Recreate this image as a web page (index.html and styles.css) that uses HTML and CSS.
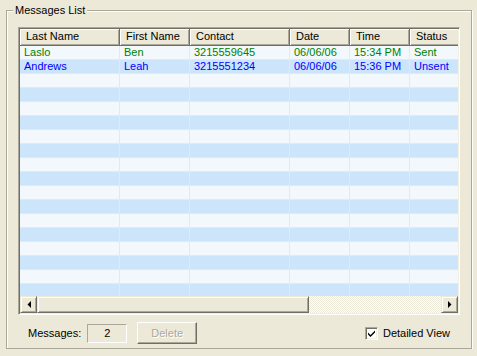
FILE: index.html
```html
<!DOCTYPE html>
<html lang="en">
<head>
    <meta charset="UTF-8">
    <title>Messages List</title>
    <link rel="stylesheet" href="styles.css">
</head>
<body>
    <fieldset class="group">
        <legend>Messages List</legend>
        <div class="listview">
            <div class="lv-view">
                <div class="lv-table">
                    <div class="lv-header">
                        <div class="hcell">Last Name</div>
                        <div class="hcell">First Name</div>
                        <div class="hcell">Contact</div>
                        <div class="hcell">Date</div>
                        <div class="hcell">Time</div>
                        <div class="hcell">Status</div>
                    </div>
                    <div class="lv-rows" id="rows">
                        <div class="row sent">
                            <div class="cell">Laslo</div>
                            <div class="cell">Ben</div>
                            <div class="cell">3215559645</div>
                            <div class="cell">06/06/06</div>
                            <div class="cell">15:34 PM</div>
                            <div class="cell">Sent</div>
                        </div>
                        <div class="row unsent">
                            <div class="cell">Andrews</div>
                            <div class="cell">Leah</div>
                            <div class="cell">3215551234</div>
                            <div class="cell">06/06/06</div>
                            <div class="cell">15:36 PM</div>
                            <div class="cell">Unsent</div>
                        </div>
                        <div class="row"><div class="cell"></div><div class="cell"></div><div class="cell"></div><div class="cell"></div><div class="cell"></div><div class="cell"></div></div>
                        <div class="row"><div class="cell"></div><div class="cell"></div><div class="cell"></div><div class="cell"></div><div class="cell"></div><div class="cell"></div></div>
                        <div class="row"><div class="cell"></div><div class="cell"></div><div class="cell"></div><div class="cell"></div><div class="cell"></div><div class="cell"></div></div>
                        <div class="row"><div class="cell"></div><div class="cell"></div><div class="cell"></div><div class="cell"></div><div class="cell"></div><div class="cell"></div></div>
                        <div class="row"><div class="cell"></div><div class="cell"></div><div class="cell"></div><div class="cell"></div><div class="cell"></div><div class="cell"></div></div>
                        <div class="row"><div class="cell"></div><div class="cell"></div><div class="cell"></div><div class="cell"></div><div class="cell"></div><div class="cell"></div></div>
                        <div class="row"><div class="cell"></div><div class="cell"></div><div class="cell"></div><div class="cell"></div><div class="cell"></div><div class="cell"></div></div>
                        <div class="row"><div class="cell"></div><div class="cell"></div><div class="cell"></div><div class="cell"></div><div class="cell"></div><div class="cell"></div></div>
                        <div class="row"><div class="cell"></div><div class="cell"></div><div class="cell"></div><div class="cell"></div><div class="cell"></div><div class="cell"></div></div>
                        <div class="row"><div class="cell"></div><div class="cell"></div><div class="cell"></div><div class="cell"></div><div class="cell"></div><div class="cell"></div></div>
                        <div class="row"><div class="cell"></div><div class="cell"></div><div class="cell"></div><div class="cell"></div><div class="cell"></div><div class="cell"></div></div>
                        <div class="row"><div class="cell"></div><div class="cell"></div><div class="cell"></div><div class="cell"></div><div class="cell"></div><div class="cell"></div></div>
                        <div class="row"><div class="cell"></div><div class="cell"></div><div class="cell"></div><div class="cell"></div><div class="cell"></div><div class="cell"></div></div>
                        <div class="row"><div class="cell"></div><div class="cell"></div><div class="cell"></div><div class="cell"></div><div class="cell"></div><div class="cell"></div></div>
                        <div class="row"><div class="cell"></div><div class="cell"></div><div class="cell"></div><div class="cell"></div><div class="cell"></div><div class="cell"></div></div>
                        <div class="row"><div class="cell"></div><div class="cell"></div><div class="cell"></div><div class="cell"></div><div class="cell"></div><div class="cell"></div></div>
                    </div>
                </div>
            </div>
            <div class="hscroll">
                <div class="sb-btn">
                    <svg width="4" height="7" viewBox="0 0 4 7"><path d="M4 0V7L0.5 3.5Z" fill="#000"/></svg>
                </div>
                <div class="sb-thumb"></div>
                <div class="sb-track"></div>
                <div class="sb-btn">
                    <svg width="4" height="7" viewBox="0 0 4 7"><path d="M0 0V7L3.5 3.5Z" fill="#000"/></svg>
                </div>
            </div>
        </div>
        <div class="footer">
            <span class="label">Messages:</span>
            <div class="count">2</div>
            <button class="btn" disabled>Delete</button>
            <label class="check">
                <span class="box">
                    <svg width="7" height="7" viewBox="0 0 7 7"><path d="M0 2.5L2.5 5L7 0.5V2.5L2.5 7L0 4.5Z" fill="#000"/></svg>
                </span>
                Detailed View
            </label>
        </div>
    </fieldset>
</body>
</html>
```

FILE: styles.css
```css
body {
    margin: 0;
    background-color: #ece9d8;
    font-family: 'Liberation Sans', Arial, sans-serif;
    font-size: 11px;
    color: #000;
}
.group {
    margin: 4px 0 0 6px;
    width: 466px;
    box-sizing: border-box;
    padding: 10px 11px 4px 11px;
    border: 1px solid #aca899;
    box-shadow: 1px 1px 0 #fff, inset 1px 1px 0 #fff;
}
.group legend {
    margin-left: -5px;
    padding: 0 2px;
    line-height: 13px;
    background-color: #ece9d8;
}
.listview {
    width: 442px;
    height: 288px;
    box-sizing: border-box;
    border: 1px solid #aca899;
    border-right-color: #fff;
    border-bottom-color: #fff;
    box-shadow: inset 1px 1px 0 #716f64, inset -1px -1px 0 #f1efe2;
    padding: 1px;
    display: flex;
    flex-direction: column;
    background-color: #fff;
}
.lv-view {
    flex: 1;
    overflow: hidden;
}
.lv-table {
    width: 450px;
}
.lv-header,
.row {
    display: grid;
    grid-template-columns: 100px 70px 100px 60px 60px 60px;
}
.hcell {
    height: 17px;
    box-sizing: border-box;
    padding-left: 6px;
    line-height: 15px;
    background-color: #ece9d8;
    border-right: 1px solid #716f64;
    border-bottom: 1px solid #716f64;
    box-shadow: inset 1px 1px 0 #fff, inset -1px -1px 0 #aca899;
    white-space: nowrap;
    overflow: hidden;
}
.row {
    height: 14px;
    box-sizing: border-box;
    border-bottom: 1px solid #ebe8dc;
    background-color: #f3f8fd;
}
.row:nth-child(even) {
    background-color: #cde5fa;
}
.cell {
    padding-left: 4px;
    line-height: 13px;
    border-right: 1px solid #ebe8dc;
    white-space: nowrap;
    overflow: hidden;
}
.sent {
    color: #008000;
}
.unsent {
    color: #0000ff;
}
.hscroll {
    height: 17px;
    display: flex;
}
.sb-btn,
.sb-thumb {
    box-sizing: border-box;
    background-color: #ece9d8;
    border: 1px solid #ece9d8;
    border-right-color: #716f64;
    border-bottom-color: #716f64;
    box-shadow: inset 1px 1px 0 #fff, inset -1px -1px 0 #aca899;
}
.sb-btn {
    width: 17px;
    display: flex;
    align-items: center;
    justify-content: center;
}
.sb-thumb {
    width: 272px;
}
.sb-track {
    flex: 1;
    background-color: #fff;
    background-image: conic-gradient(#ece9d8 25%, #fff 0 50%, #ece9d8 0 75%, #fff 0);
    background-size: 2px 2px;
}
.footer {
    margin-top: 7px;
    height: 22px;
    display: flex;
    align-items: center;
    padding: 0 10px;
}
.label {
    margin-right: 6px;
}
.count {
    width: 40px;
    height: 19px;
    box-sizing: border-box;
    border: 1px solid #aca899;
    border-right-color: #fff;
    border-bottom-color: #fff;
    text-align: center;
    line-height: 17px;
}
.btn {
    margin-left: 10px;
    width: 60px;
    height: 22px;
    padding: 0;
    font: inherit;
    color: #aca899;
    text-shadow: 1px 1px 0 #fff;
    background-color: #ece9d8;
    border: 1px solid #fff;
    border-right-color: #716f64;
    border-bottom-color: #716f64;
    box-shadow: inset -1px -1px 0 #aca899;
}
.check {
    margin-left: auto;
    display: flex;
    align-items: center;
    gap: 5px;
}
.box {
    width: 13px;
    height: 13px;
    box-sizing: border-box;
    background-color: #fff;
    border: 1px solid #aca899;
    border-right-color: #fff;
    border-bottom-color: #fff;
    box-shadow: inset 1px 1px 0 #716f64, inset -1px -1px 0 #f1efe2;
    display: flex;
    align-items: center;
    justify-content: center;
}
```
